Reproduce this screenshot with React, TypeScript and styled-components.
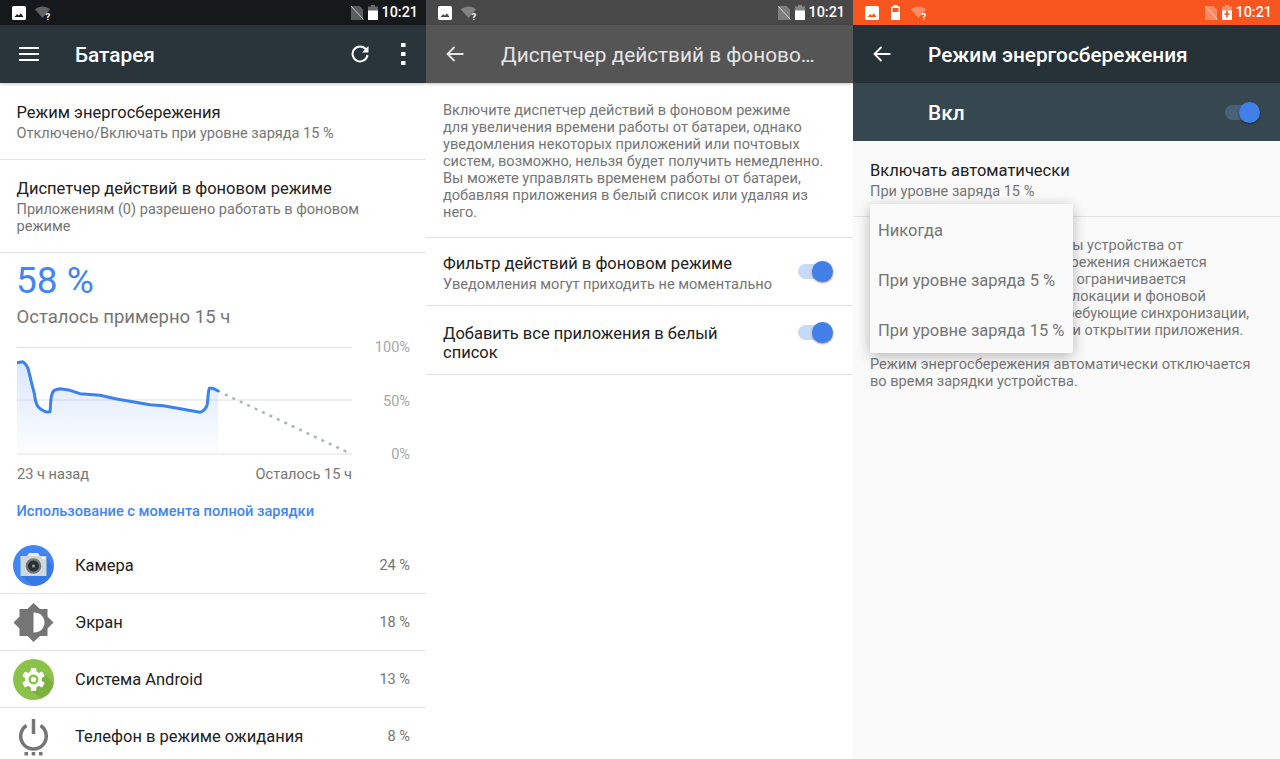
import React from "react";
import styled, { createGlobalStyle } from "styled-components";

const Global = createGlobalStyle`
  html, body { margin: 0; padding: 0; height: 100%; overflow: hidden; background: #fff; }
  body { font-family: Roboto, "Liberation Sans", sans-serif; -webkit-font-smoothing: antialiased; }
  #root { height: 759px; }
`;

const Screens = styled.div`
  display: grid;
  grid-template-columns: 426px 427px 427px;
  width: 1280px;
  height: 759px;
  overflow: hidden;
`;
const Screen = styled.section<{ $bg?: string }>`
  position: relative;
  display: flex;
  flex-direction: column;
  height: 759px;
  overflow: hidden;
  background: ${(p) => p.$bg || "#fff"};
`;
const StatusBar = styled.div<{ $bg: string }>`
  flex: none;
  height: 25px;
  display: flex;
  align-items: center;
  padding: 0 8px 0 12px;
  background: ${(p) => p.$bg};
  color: #fff;
`;
const StatusLeft = styled.div`
  display: flex;
  align-items: center;
  gap: 10px;
  flex: 1;
`;
const Clock = styled.span`
  font-size: 14.4px;
  font-weight: 500;
  margin-left: 3px;
`;
const AppBar = styled.header<{ $bg: string; $color?: string; $shadow?: boolean }>`
  flex: none;
  height: 58px;
  display: flex;
  align-items: center;
  background: ${(p) => p.$bg};
  color: ${(p) => p.$color || "#fff"};
  box-shadow: ${(p) => (p.$shadow ? "0 1px 3px rgba(0,0,0,.25)" : "none")};
  position: relative;
`;
const NavSlot = styled.div`
  width: 75px;
  flex: none;
  display: flex;
  padding-left: 19px;
  box-sizing: border-box;
`;
const Title = styled.h1<{ $weight?: number }>`
  flex: 1;
  margin: 0;
  padding-top: 1px;
  font-size: 20.8px;
  font-weight: ${(p) => p.$weight || 500};
  white-space: nowrap;
`;
const Actions = styled.div`
  display: flex;
  align-items: center;
  gap: 32px;
  padding-right: 20px;
`;
const SettingRow = styled.div<{ $h: number; $pad: number }>`
  flex: none;
  height: ${(p) => p.$h}px;
  box-sizing: border-box;
  padding: ${(p) => p.$pad}px 16px 0 16.5px;
  border-bottom: 1px solid #e2e2e2;
`;
const RowTitle = styled.div`
  font-size: 16.5px;
  line-height: 19px;
  color: #212121;
`;
const RowSub = styled.div`
  font-size: 14.55px;
  line-height: 17px;
  color: #757575;
  margin-top: 3px;
`;
const Level = styled.div`
  font-size: 37px;
  line-height: 42px;
  color: #4285f4;
  margin: 7px 0 0 16px;
`;
const Estimate = styled.div`
  font-size: 18.5px;
  line-height: 22px;
  color: #757575;
  margin: 4px 0 0 16.5px;
`;
const ChartWrap = styled.div`
  display: grid;
  grid-template-columns: 335px 58px;
  margin: 19px 0 0 17px;
  height: 108px;
`;
const YAxis = styled.div`
  display: flex;
  flex-direction: column;
  justify-content: space-between;
  align-items: flex-end;
  font-size: 14.55px;
  line-height: 14px;
  color: #a8a8a8;
  height: 121px;
  margin-top: -6px;
`;
const XAxis = styled.div`
  display: flex;
  justify-content: space-between;
  width: 335px;
  margin: 11px 0 0 17px;
  font-size: 14.6px;
  line-height: 17px;
  color: #757575;
`;
const SectionLink = styled.div`
  margin: 20px 0 0 16.5px;
  font-size: 14.6px;
  line-height: 17px;
  font-weight: 500;
  color: #4285f4;
`;
const UsageList = styled.div`
  margin-top: 17px;
`;
const UsageRow = styled.div<{ $last?: boolean }>`
  height: 57px;
  box-sizing: border-box;
  display: flex;
  align-items: center;
  padding: 0 16px 0 13px;
  border-bottom: ${(p) => (p.$last ? "none" : "1px solid #e2e2e2")};
`;
const UsageIcon = styled.div`
  width: 62px;
  flex: none;
  display: flex;
`;
const UsageName = styled.div`
  flex: 1;
  font-size: 16.5px;
  color: #212121;
`;
const UsagePct = styled.div`
  font-size: 14.55px;
  color: #757575;
`;
const Intro = styled.div`
  padding-left: 17px;
  font-size: 14.55px;
  line-height: 17px;
  color: #757575;
  white-space: nowrap;
`;
const IntroBlock = styled.div<{ $top: number; $bottom: number; $plain?: boolean }>`
  padding-top: ${(p) => p.$top}px;
  padding-bottom: ${(p) => p.$bottom}px;
  border-bottom: ${(p) => (p.$plain ? "none" : "1px solid #e2e2e2")};
`;
const ToggleRow = styled.div<{ $h: number; $pad: number }>`
  height: ${(p) => p.$h}px;
  box-sizing: border-box;
  padding: ${(p) => p.$pad}px 27px 0 17px;
  display: flex;
  justify-content: space-between;
  border-bottom: 1px solid #e2e2e2;
`;
const ToggleText = styled.div`
  width: 330px;
`;
const ToggleSlot = styled.div<{ $top: number }>`
  padding-top: ${(p) => p.$top}px;
`;
const ToggleTrack = styled.div<{ $dark?: boolean }>`
  position: relative;
  width: 28px;
  height: 15px;
  border-radius: 8px;
  background: ${(p) => (p.$dark ? "#4a6078" : "#c6daf8")};
`;
const ToggleThumb = styled.div`
  position: absolute;
  right: -7px;
  top: -3px;
  width: 21px;
  height: 21px;
  border-radius: 50%;
  background: #4080e8;
  box-shadow: 0 1px 2px rgba(0, 0, 0, 0.45);
`;
const OnBar = styled.div`
  flex: none;
  height: 58px;
  box-sizing: border-box;
  padding: 1px 27px 0 75px;
  background: #37474f;
  color: #fff;
  display: flex;
  align-items: center;
  justify-content: space-between;
  font-size: 20.8px;
  font-weight: 500;
`;
const Menu = styled.div`
  position: absolute;
  left: 17px;
  top: 204px;
  width: 203px;
  height: 149px;
  padding: 1.5px 0 0 8px;
  box-sizing: border-box;
  background: #fafafa;
  border-radius: 2px;
  box-shadow: 0 3px 14px rgba(0, 0, 0, 0.28);
  display: flex;
  flex-direction: column;
`;
const MenuItem = styled.div`
  height: 50px;
  flex: none;
  display: flex;
  align-items: center;
  font-size: 16.5px;
  color: #757575;
  white-space: nowrap;
`;

const Photo = () => (
  <svg width="14" height="14" viewBox="0 0 14 14">
    <path fill="currentColor" fillRule="evenodd" d="M1.5 0h11A1.5 1.5 0 0 1 14 1.500v11a1.500 1.500 0 0 1-1.500 1.500h-11A1.500 1.500 0 0 1 0 12.500v-11A1.500 1.500 0 0 1 1.500 0zM2.500 11h9L8.800 7.200 6.800 9.700 5.300 8z" />
  </svg>
);
const Wifi = () => (
  <svg width="18" height="14" viewBox="0 0 18 14" style={{ marginLeft: -1 }}>
    <path fill="currentColor" opacity=".32" d="M0 3.500C2.500 1.300 5.200.5 7.500.5s5 .8 7.500 3L7.500 12z" />
    <text x="10.500" y="13.500" fontSize="9.500" fontWeight="700" fill="currentColor" fontFamily="Roboto, sans-serif">?</text>
  </svg>
);
const BatteryLock = () => (
  <svg width="9" height="15" viewBox="0 0 9 15" style={{ marginLeft: 2, marginRight: 2 }}>
    <path fill="currentColor" fillRule="evenodd" d="M2.500 0h4v1.500H9V15H0V1.500h2.500zM1.500 3v4h6V3z" />
  </svg>
);
const NoSim = () => (
  <svg width="13" height="14" viewBox="0 0 13 14">
    <path fill="currentColor" opacity=".3" d="M0 0h8.500L12 3.500V14H0z" />
    <path stroke="currentColor" opacity=".65" strokeWidth="1" d="M0 0l12.500 13.500" />
  </svg>
);
const Battery = ({ charging }: { charging?: boolean }) => (
  <svg width="10" height="15" viewBox="0 0 10 15" style={{ marginLeft: 4 }}>
    <path fill="currentColor" opacity=".35" d="M3 0h4v1.500h3V6H0V1.500h3z" />
    <path fill="currentColor" d="M0 5.500h10V15H0z" />
    {charging && <path stroke="#f4511e" strokeWidth="1.500" d="M5 5.500v7M2.500 9h5" />}
  </svg>
);

const Status = ({ bg, lock, charging }: { bg: string; lock?: boolean; charging?: boolean }) => (
  <StatusBar $bg={bg}>
    <StatusLeft>
      <Photo />
      {lock && <BatteryLock />}
      <Wifi />
    </StatusLeft>
    <NoSim />
    <Battery charging={charging} />
    <Clock>10:21</Clock>
  </StatusBar>
);

const Back = () => (
  <svg width="20" height="18" viewBox="0 0 20 18" fill="none" stroke="currentColor" strokeWidth="1.800">
    <path d="M18.500 9H3M9.500 2 2.500 9l7 7" />
  </svg>
);
const Burger = () => (
  <svg width="20" height="16" viewBox="0 0 20 16" fill="currentColor">
    <path d="M0 1h20v2H0zM0 7h20v2H0zM0 13h20v2H0z" />
  </svg>
);
const Refresh = () => (
  <svg width="18" height="18" viewBox="0 0 18 18" fill="none">
    <path stroke="#fff" strokeWidth="2" d="M15 4.300A7.500 7.500 0 1 0 16.500 10" />
    <path fill="#fff" d="M17.500 1v6.500H11z" />
  </svg>
);
const More = () => (
  <svg width="5" height="22" viewBox="0 0 5 22" fill="#fff">
    <path d="M0 0h4.500v4H0zM0 9h4.500v4H0zM0 18h4.500v4H0z" />
  </svg>
);

const CameraIcon = () => (
  <svg width="41" height="41" viewBox="0 0 41 41">
    <circle cx="20.500" cy="20.500" r="20.500" fill="#4285f4" />
    <path fill="#2f6fdc" d="M7 30 32 9l8.500 15A20.500 20.500 0 0 1 20 41z" opacity=".6" />
    <path fill="#cfd8dc" d="M7.500 11h26v20h-26z" />
    <path fill="#eceff1" d="M7.500 11H27l-2-3h-9l-2 3z" />
    <path fill="#fff" d="M29 12h3v2h-3z" />
    <circle cx="20.500" cy="21" r="7.800" fill="#757575" />
    <circle cx="20.500" cy="21" r="5.500" fill="#263238" />
    <circle cx="20.500" cy="21" r="1.500" fill="#9e9e9e" />
  </svg>
);
const BrightIcon = () => (
  <svg width="41" height="41" viewBox="0 0 41 41">
    <path fill="#757575" d="M20.500 1 27 7h7.500v7.500l6 6-6 6V34H27l-6.500 6-6-6H6.500v-7.500l-6-6 6-6V7h8z" />
    <path fill="#fff" d="M20.500 10.500c7.500 0 11 5 11 10s-3.500 10-11 10z" />
  </svg>
);
const GearIcon = () => (
  <svg width="41" height="41" viewBox="0 0 41 41">
    <circle cx="20.500" cy="20.500" r="20.500" fill="#8bc34a" />
    <path fill="#7cb13f" d="M30 14 41 24A20.500 20.500 0 0 1 28 39.500L13 28z" />
    <g transform="translate(20.500 20.500)">
      {[0, 60, 120, 180, 240, 300].map((a) => (
        <rect key={a} x="-2.800" y="-11.500" width="5.600" height="6" rx="1" fill="#fff" transform={`rotate(${a})`} />
      ))}
      <circle r="8.500" fill="#fff" />
      <circle r="5" fill="#8bc34a" />
      <circle r="2.600" fill="#fff" />
    </g>
  </svg>
);
const PowerIcon = () => (
  <svg width="41" height="41" viewBox="0 0 41 41">
    <g fill="none" stroke="#757575" strokeWidth="3.500">
      <path d="M27.500 9.500a12.800 12.800 0 1 1-14 0" />
      <path d="M20.500 3v15" />
    </g>
    <path fill="#757575" d="M11.500 36h3.500v3.500h-3.500zM18.700 36h3.500v3.500h-3.500zM26 36h3.500v3.500H26z" />
  </svg>
);

const line =
  "M0 15.700 5.700 14.700C8 16 10 19 11.300 22.300L14.700 36.300 17.300 46.300C18 52 19 56 20.300 58.700 22 61 23 61.500 24.700 62.700 27 64 28 64.800 29.700 65L33 64.700C33.600 60 33.500 52 34.700 48 35.500 45 36.500 43.600 38 43L43 41.700 53 43.300 63 46.700 83 48.300 99.700 52 133 57.700 146.300 58.700 183 65.300C185 65 186 64 187 63 189 61 190 59 190.300 57.300 191 52 191 44 192.300 41.300L196 41.300 201.300 44";

const Chart = () => (
  <svg width="335" height="108" viewBox="0 0 335 108">
    <defs>
      <linearGradient id="fade" x1="0" y1="0" x2="0" y2="1">
        <stop offset="0" stopColor="#4285f4" stopOpacity=".2" />
        <stop offset="1" stopColor="#4285f4" stopOpacity=".01" />
      </linearGradient>
    </defs>
    <path d="M0 .5h335M0 53h335M0 107h335" stroke="#e0e0e0" strokeWidth="1" fill="none" />
    <path d={`${line}V106H0z`} fill="url(#fade)" />
    <path d={line} fill="none" stroke="#3b82f0" strokeWidth="3" strokeLinejoin="round" strokeLinecap="round" />
    <path d="M208 47.300 331 105.500" fill="none" stroke="#a6b6bb" strokeWidth="2.500" strokeDasharray="3 5.200" />
  </svg>
);

const usage = [
  { name: "Камера", pct: "24 %", icon: <CameraIcon /> },
  { name: "Экран", pct: "18 %", icon: <BrightIcon /> },
  { name: "Система Android", pct: "13 %", icon: <GearIcon /> },
  { name: "Телефон в режиме ожидания", pct: "8 %", icon: <PowerIcon /> },
];

const Toggle = ({ dark }: { dark?: boolean }) => (
  <ToggleTrack $dark={dark}>
    <ToggleThumb />
  </ToggleTrack>
);

export default function App() {
  return (
    <Screens>
      <Global />
      <Screen>
        <Status bg="#15191b" />
        <AppBar $bg="#29353b" $shadow>
          <NavSlot>
            <Burger />
          </NavSlot>
          <Title>Батарея</Title>
          <Actions>
            <Refresh />
            <More />
          </Actions>
        </AppBar>
        <SettingRow $h={77} $pad={20}>
          <RowTitle>Режим энергосбережения</RowTitle>
          <RowSub>Отключено/Включать при уровне заряда 15 %</RowSub>
        </SettingRow>
        <SettingRow $h={93} $pad={19}>
          <RowTitle>Диспетчер действий в фоновом режиме</RowTitle>
          <RowSub>
            Приложениям (0) разрешено работать в фоновом
            <br />
            режиме
          </RowSub>
        </SettingRow>
        <Level>58 %</Level>
        <Estimate>Осталось примерно 15 ч</Estimate>
        <ChartWrap>
          <Chart />
          <YAxis>
            <span>100%</span>
            <span>50%</span>
            <span>0%</span>
          </YAxis>
        </ChartWrap>
        <XAxis>
          <span>23 ч назад</span>
          <span>Осталось 15 ч</span>
        </XAxis>
        <SectionLink>Использование с момента полной зарядки</SectionLink>
        <UsageList>
          {usage.map((u, i) => (
            <UsageRow key={u.name} $last={i === usage.length - 1}>
              <UsageIcon>{u.icon}</UsageIcon>
              <UsageName>{u.name}</UsageName>
              <UsagePct>{u.pct}</UsagePct>
            </UsageRow>
          ))}
        </UsageList>
      </Screen>

      <Screen>
        <Status bg="#484848" />
        <AppBar $bg="#555555" $color="#e4e4e4" $shadow>
          <NavSlot>
            <Back />
          </NavSlot>
          <Title $weight={400}>Диспетчер действий в фоново…</Title>
        </AppBar>
        <IntroBlock $top={19} $bottom={16}>
          <Intro>
            Включите диспетчер действий в фоновом режиме
            <br />
            для увеличения времени работы от батареи, однако
            <br />
            уведомления некоторых приложений или почтовых
            <br />
            систем, возможно, нельзя будет получить немедленно.
            <br />
            Вы можете управлять временем работы от батареи,
            <br />
            добавляя приложения в белый список или удаляя из
            <br />
            него.
          </Intro>
        </IntroBlock>
        <ToggleRow $h={68} $pad={16}>
          <ToggleText>
            <RowTitle>Фильтр действий в фоновом режиме</RowTitle>
            <RowSub>Уведомления могут приходить не моментально</RowSub>
          </ToggleText>
          <ToggleSlot $top={10}>
            <Toggle />
          </ToggleSlot>
        </ToggleRow>
        <ToggleRow $h={69} $pad={18}>
          <ToggleText>
            <RowTitle>
              Добавить все приложения в белый
              <br />
              список
            </RowTitle>
          </ToggleText>
          <ToggleSlot $top={1}>
            <Toggle />
          </ToggleSlot>
        </ToggleRow>
      </Screen>

      <Screen $bg="#fafafa">
        <Status bg="#f9561f" lock charging />
        <AppBar $bg="#263238">
          <NavSlot>
            <Back />
          </NavSlot>
          <Title>Режим энергосбережения</Title>
        </AppBar>
        <OnBar>
          Вкл
          <Toggle dark />
        </OnBar>
        <IntroBlock $top={20} $bottom={16}>
          <Intro>
            <RowTitle>Включать автоматически</RowTitle>
            <RowSub>При уровне заряда 15 %</RowSub>
          </Intro>
        </IntroBlock>
        <IntroBlock $top={20} $bottom={0} $plain>
          <Intro>
            Чтобы продлить время работы устройства от
            <br />
            батареи, в режиме энергосбережения снижается
            <br />
            производительность, а также ограничивается
            <br />
            вибрация, работа службы геолокации и фоновой
            <br />
            передача данных. Службы, требующие синхронизации,
            <br />
            обновляются только лишь при открытии приложения.
            <br />
            <br />
            Режим энергосбережения автоматически отключается
            <br />
            во время зарядки устройства.
          </Intro>
        </IntroBlock>
        <Menu>
          <MenuItem>Никогда</MenuItem>
          <MenuItem>При уровне заряда 5 %</MenuItem>
          <MenuItem>При уровне заряда 15 %</MenuItem>
        </Menu>
      </Screen>
    </Screens>
  );
}
